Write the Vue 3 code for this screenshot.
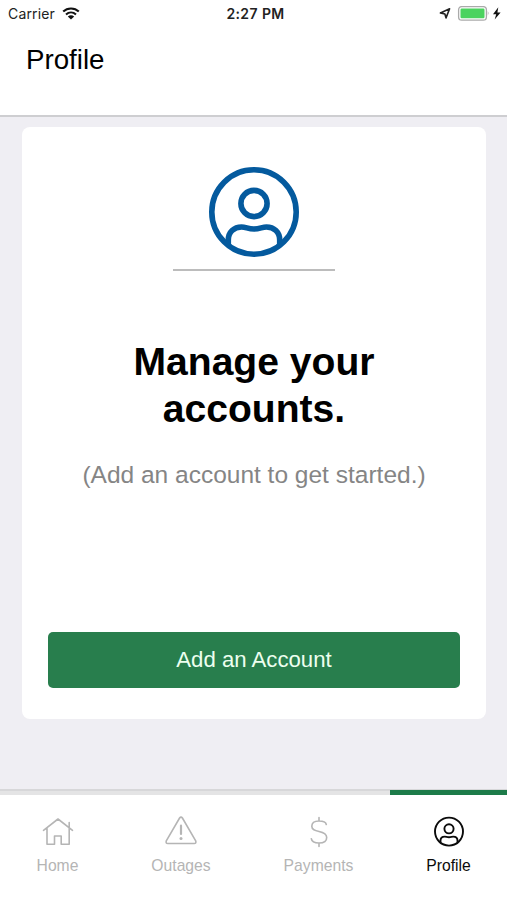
<script setup>
const tabs = [
  { name: 'Home', icon: 'home' },
  { name: 'Outages', icon: 'outages' },
  { name: 'Payments', icon: 'payments' },
  { name: 'Profile', icon: 'profile', active: true },
]
</script>

<template>
  <div class="screen">
    <header class="header">
      <div class="status">
        <div class="carrier">
          <span>Carrier</span>
          <svg class="wifi" viewBox="0 0 18 13" width="18" height="13">
            <path d="M1.2 4.5C5.5.4 12.500.4 16.800 4.500M4 7.500C6.900 4.900 11.100 4.900 14 7.500" fill="none" stroke="#111" stroke-width="2.100" />
            <path d="M5.800 9.400Q9 7 12.200 9.400L9 12.500Z" fill="#111" />
          </svg>
        </div>
        <span class="time">2:27 PM</span>
        <div class="power">
          <svg width="64" height="16" viewBox="0 0 64 16">
            <path d="M1.400 6.900L10.600 2.800L7 11.900L5.900 8Z" fill="none" stroke="#222" stroke-width="1.600" stroke-linejoin="round" />
            <rect x="19.600" y="0.600" width="27.800" height="13.600" rx="3.200" fill="#fff" stroke="#aaa" stroke-width="1.300" />
            <rect x="21.500" y="2.500" width="24" height="9.800" rx="1.200" fill="#4bd35f" />
            <path d="M48.800 5Q50.400 7.300 48.800 9.700Z" fill="#999" />
            <path d="M59.300 1.200L54 8.200H57.200L55.700 13.400L61.600 6.400H58.400Z" fill="#111" />
          </svg>
        </div>
      </div>
      <h1 class="title">Profile</h1>
    </header>

    <main class="content">
      <section class="card">
        <svg class="avatar" viewBox="0 0 90 90" width="90" height="90" fill="none" stroke="#045a9e" stroke-width="5.600">
          <circle cx="45" cy="45" r="42.200" />
          <circle cx="45" cy="36.500" r="13.100" />
          <path d="M19.300 78V73C19.300 65 25 60 32.500 60C37 60 39 62 45 62S53 60 57.500 60C65 60 70.700 65 70.700 73V78" />
        </svg>
        <div class="rule"></div>
        <h2 class="heading">Manage your<br />accounts.</h2>
        <p class="hint">(Add an account to get started.)</p>
        <button class="add" type="button">Add an Account</button>
      </section>
    </main>

    <nav class="tabs">
      <a v-for="tab in tabs" :key="tab.name" class="tab" :class="[tab.icon, { active: tab.active }]">
        <svg class="icon" viewBox="0 0 32 32" width="32" height="32" fill="none" stroke="currentColor" stroke-width="1.600" stroke-linejoin="round" stroke-linecap="round">
          <template v-if="tab.icon === 'home'">
            <path d="M1.500 14.300L16 3L30.500 14.300M5 12V28.300H12.500V20H19.200V28.300H27.200V6.500" />
          </template>
          <template v-else-if="tab.icon === 'outages'">
            <path d="M14.600 2Q16 .2 17.400 2L30.700 24.800Q31.500 27.500 29.200 27.500H2.800Q.5 27.500 1.300 24.800Z" />
            <path d="M16 9.700V18" stroke-width="2.200" />
            <circle cx="16" cy="22.500" r="1.500" fill="currentColor" stroke="none" />
          </template>
          <template v-else-if="tab.icon === 'payments'">
            <path d="M16 1.500V5M16 27V30.500M23.300 8.500C22.800 6 20 5 16 5C11.500 5 8.800 6.800 8.800 10.200C8.800 13.800 12 14.600 16 15.500C20.500 16.500 23.700 17.700 23.700 21.500C23.700 25.200 20.700 27 16 27C11.500 27 8.700 25.500 8.300 22.700" />
          </template>
          <g v-else stroke-width="1.900">
            <circle cx="16" cy="15.600" r="14" />
            <circle cx="16" cy="12.800" r="4.600" />
            <path d="M7.500 26.600V24.600C7.500 22.100 9.400 20.600 11.800 20.600C13.300 20.600 14 21.200 16 21.200S18.700 20.600 20.200 20.600C22.600 20.600 24.500 22.100 24.500 24.600V26.600" />
          </g>
        </svg>
        <span>{{ tab.name }}</span>
      </a>
    </nav>
  </div>
</template>

<style>
body { background: #fff; }
</style>

<style scoped>
* { box-sizing: border-box; }
.screen {
  display: flex;
  flex-direction: column;
  height: 900px;
  background: #efeef3;
  font-family: "Liberation Sans", Arial, sans-serif;
  color: #000;
}
.header {
  height: 117px;
  background: #fff;
  border-bottom: 2px solid #ceced1;
}
.status {
  display: grid;
  grid-template-columns: 1fr auto 1fr;
  height: 28px;
  padding: 0 4px 0 8px;
  align-items: center;
  font: 400 14px/28px Inter, sans-serif;
  color: #222;
}
.carrier { display: flex; align-items: center; gap: 7px; letter-spacing: 0.150px; }
.wifi { margin-bottom: 2px; }
.time { font-weight: 600; letter-spacing: 0.400px; }
.power { display: flex; justify-content: flex-end; }
.title {
  margin: 16px 0 0 26px;
  font-size: 27.700px;
  line-height: 32px;
  font-weight: 400;
}
.content { flex: 1; padding: 10px 21px 0 22px; }
.card {
  display: flex;
  flex-direction: column;
  align-items: center;
  height: 592px;
  padding: 40px 26px 0;
  background: #fff;
  border-radius: 8px;
}
.avatar { display: block; }
.rule { width: 162px; height: 2px; margin: 12px 1px 0 0; background: #bcbcbc; }
.heading {
  margin: 67px 0 0;
  font-size: 39.100px;
  line-height: 47px;
  text-align: center;
}
.hint {
  margin: 27px 0 0;
  font-size: 24.500px;
  line-height: 32px;
  color: #858585;
}
.add {
  width: 412px;
  height: 56px;
  margin: 141px 0 0;
  padding: 0;
  border: 0;
  border-radius: 5px;
  background: #287e4d;
  color: #edffef;
  font: 22.200px "Liberation Sans", Arial, sans-serif;
}
.tabs {
  display: grid;
  grid-template-columns: 115px 132px 143px 117px;
  height: 111px;
  background: #fff;
  border-top: 2px solid #d7d7d9;
}
.tab {
  display: flex;
  flex-direction: column;
  align-items: center;
  padding-top: 21px;
  border-top: 4px solid #e4e4e5;
  font-size: 15.700px;
  line-height: 20px;
  color: #b5b5b5;
}
.icon { display: block; margin-bottom: 8px; }
.active { border-color: #1d7b49; box-shadow: 0 -1px #1d7b49; color: #0b0b0b; }
</style>
